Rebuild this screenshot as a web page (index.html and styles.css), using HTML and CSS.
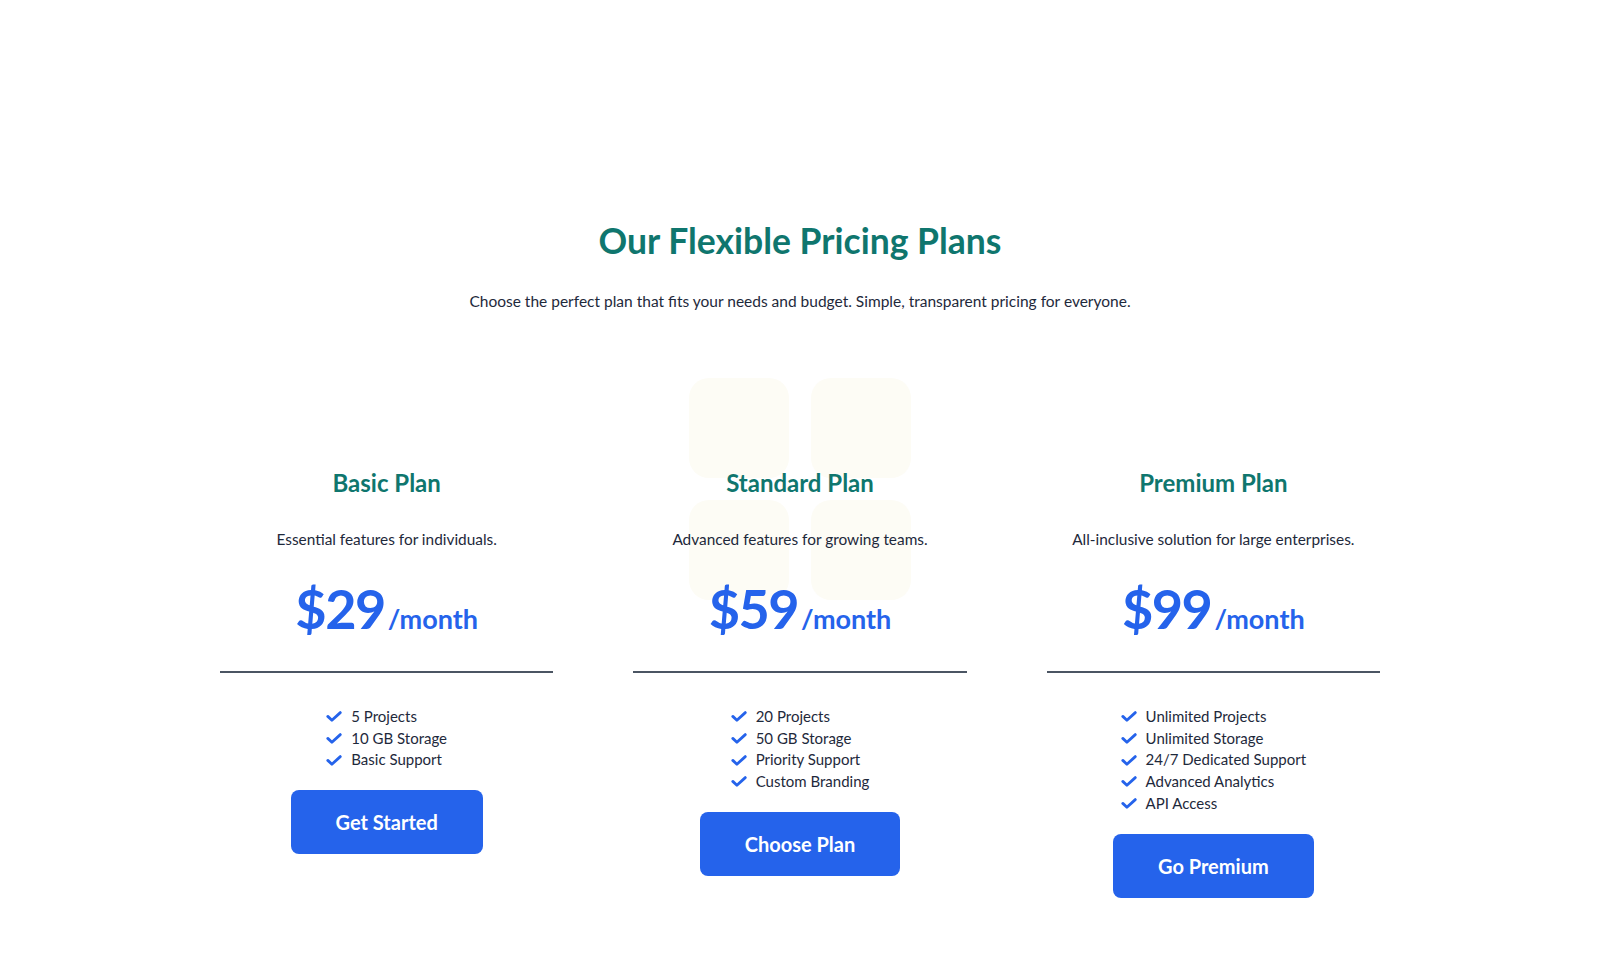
FILE: index.html
```html
<!DOCTYPE html>
<html lang="en">
<head>
<meta charset="utf-8">
<title>Pricing Plans</title>
<link rel="stylesheet" href="styles.css">
</head>
<body>
<section class="pricing">
  <h1 class="pricing-title">Our Flexible Pricing Plans</h1>
  <p class="pricing-sub">Choose the perfect plan that fits your needs and budget. Simple, transparent pricing for everyone.</p>
  <div class="plans">
    <div class="plan">
      <h2 class="plan-name">Basic Plan</h2>
      <p class="plan-desc">Essential features for individuals.</p>
      <div class="plan-price"><span class="amount">$29</span><span class="period">/month</span></div>
      <hr class="plan-rule">
      <ul class="features">
        <li><svg class="check" viewBox="0 0 16 11"><polyline points="1.8,5.4 5.9,9.2 14.3,1.6"/></svg>5 Projects</li>
        <li><svg class="check" viewBox="0 0 16 11"><polyline points="1.8,5.4 5.9,9.2 14.3,1.6"/></svg>10 GB Storage</li>
        <li><svg class="check" viewBox="0 0 16 11"><polyline points="1.8,5.4 5.9,9.2 14.3,1.6"/></svg>Basic Support</li>
      </ul>
      <a class="btn" href="#">Get Started</a>
    </div>
    <div class="plan plan-featured">
      <div class="deco" aria-hidden="true"><span></span><span></span><span></span><span></span></div>
      <h2 class="plan-name">Standard Plan</h2>
      <p class="plan-desc">Advanced features for growing teams.</p>
      <div class="plan-price"><span class="amount">$59</span><span class="period">/month</span></div>
      <hr class="plan-rule">
      <ul class="features">
        <li><svg class="check" viewBox="0 0 16 11"><polyline points="1.8,5.4 5.9,9.2 14.3,1.6"/></svg>20 Projects</li>
        <li><svg class="check" viewBox="0 0 16 11"><polyline points="1.8,5.4 5.9,9.2 14.3,1.6"/></svg>50 GB Storage</li>
        <li><svg class="check" viewBox="0 0 16 11"><polyline points="1.8,5.4 5.9,9.2 14.3,1.6"/></svg>Priority Support</li>
        <li><svg class="check" viewBox="0 0 16 11"><polyline points="1.8,5.4 5.9,9.2 14.3,1.6"/></svg>Custom Branding</li>
      </ul>
      <a class="btn" href="#">Choose Plan</a>
    </div>
    <div class="plan">
      <h2 class="plan-name">Premium Plan</h2>
      <p class="plan-desc">All-inclusive solution for large enterprises.</p>
      <div class="plan-price"><span class="amount">$99</span><span class="period">/month</span></div>
      <hr class="plan-rule">
      <ul class="features">
        <li><svg class="check" viewBox="0 0 16 11"><polyline points="1.8,5.4 5.9,9.2 14.3,1.6"/></svg>Unlimited Projects</li>
        <li><svg class="check" viewBox="0 0 16 11"><polyline points="1.8,5.4 5.9,9.2 14.3,1.6"/></svg>Unlimited Storage</li>
        <li><svg class="check" viewBox="0 0 16 11"><polyline points="1.8,5.4 5.9,9.2 14.3,1.6"/></svg>24/7 Dedicated Support</li>
        <li><svg class="check" viewBox="0 0 16 11"><polyline points="1.8,5.4 5.9,9.2 14.3,1.6"/></svg>Advanced Analytics</li>
        <li><svg class="check" viewBox="0 0 16 11"><polyline points="1.8,5.4 5.9,9.2 14.3,1.6"/></svg>API Access</li>
      </ul>
      <a class="btn" href="#">Go Premium</a>
    </div>
  </div>
</section>
</body>
</html>
```

FILE: styles.css
```css
* { box-sizing: border-box; }

html, body {
  margin: 0;
  padding: 0;
  background: #ffffff;
}

body {
  font-family: Lato, "Open Sans", "Liberation Sans", sans-serif;
  color: #1e293b;
}

.pricing {
  padding: 219px 20px 80px;
  text-align: center;
}

.pricing-title {
  margin: 0;
  font-size: 35.5px;
  line-height: 43px;
  font-weight: 700;
  color: #0f766e;
}

.pricing-sub {
  margin: 27px 0 0;
  font-size: 15.5px;
  line-height: 24px;
  color: #1e293b;
}

.plans {
  max-width: 1160px;
  margin: 155px auto 0;
  display: grid;
  grid-template-columns: repeat(3, 1fr);
  column-gap: 80px;
  align-items: start;
}

.plan {
  position: relative;
  isolation: isolate;
  display: flex;
  flex-direction: column;
  align-items: center;
}

.deco {
  position: absolute;
  z-index: -1;
  top: -90px;
  left: 50%;
  transform: translateX(-50%);
  display: grid;
  grid-template-columns: 100px 100px;
  grid-template-rows: 100px 100px;
  gap: 22px;
}

.deco span {
  display: block;
  background: #fdfcf5;
  border-radius: 20px;
}

.plan-name {
  margin: 0;
  font-size: 24px;
  line-height: 29px;
  font-weight: 700;
  color: #0f766e;
}

.plan-desc {
  margin: 31px 0 0;
  font-size: 15.4px;
  line-height: 22px;
  color: #1e293b;
}

.plan-price {
  margin-top: 31px;
  line-height: 56px;
  height: 56px;
  color: #2563eb;
  white-space: nowrap;
}

.amount {
  font-size: 54px;
  font-weight: 700;
  letter-spacing: -1.5px;
}

.period {
  font-size: 27px;
  font-weight: 700;
  margin-left: 3px;
}

.plan-rule {
  width: 100%;
  margin: 34px 0 0;
  border: 0;
  height: 2px;
  background: #4b5563;
}

.features {
  list-style: none;
  margin: 33px 0 0;
  padding: 0;
  text-align: left;
}

.features li {
  display: flex;
  align-items: center;
  font-size: 15px;
  line-height: 21.7px;
  color: #1e293b;
}

.check {
  width: 16px;
  height: 11px;
  margin-right: 9px;
  fill: none;
  stroke: #2563eb;
  stroke-width: 2.8;
  stroke-linecap: round;
  stroke-linejoin: round;
  flex: none;
}

.btn {
  display: inline-block;
  margin-top: 19px;
  padding: 20px 45px;
  background: #2563eb;
  color: #ffffff;
  border-radius: 8px;
  text-decoration: none;
  font-size: 20px;
  line-height: 24px;
  font-weight: 700;
}
```
